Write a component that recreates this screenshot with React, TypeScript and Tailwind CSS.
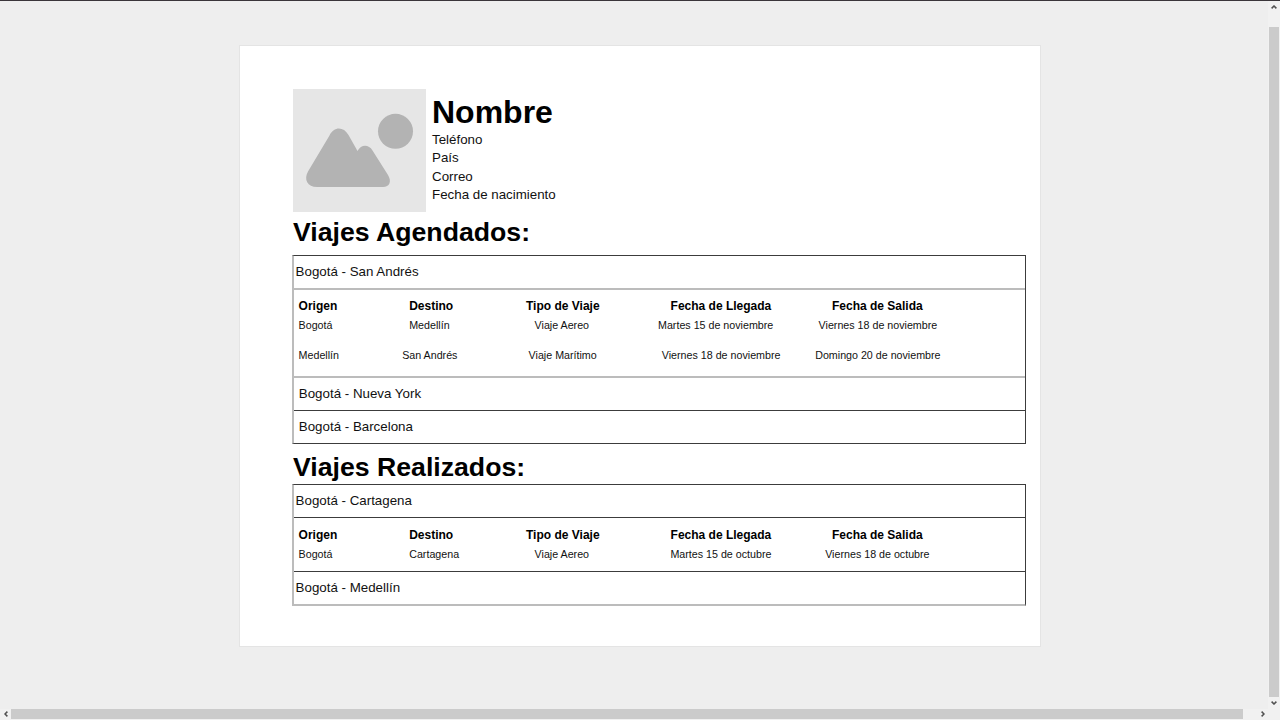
import { ReactNode } from "react";

type Cell = { text: string; pad: string };

const heads: Cell[] = [
  { text: "Origen", pad: "pl-[0.6px]" },
  { text: "Destino", pad: "pl-[9.2px]" },
  { text: "Tipo de Viaje", pad: "pl-[6px]" },
  { text: "Fecha de Llegada", pad: "pl-[20.6px]" },
  { text: "Fecha de Salida", pad: "pl-[22px]" },
];

const scheduled: Cell[][] = [
  [
    { text: "Bogotá", pad: "pl-[0.6px]" },
    { text: "Medellín", pad: "pl-[9.2px]" },
    { text: "Viaje Aereo", pad: "pl-[14.6px]" },
    { text: "Martes 15 de noviembre", pad: "pl-[8px]" },
    { text: "Viernes 18 de noviembre", pad: "pl-[8.6px]" },
  ],
  [
    { text: "Medellín", pad: "pl-[0.6px]" },
    { text: "San Andrés", pad: "pl-[2.2px]" },
    { text: "Viaje Marítimo", pad: "pl-[8.6px]" },
    { text: "Viernes 18 de noviembre", pad: "pl-[11.8px]" },
    { text: "Domingo 20 de noviembre", pad: "pl-[5.2px]" },
  ],
];

const done: Cell[] = [
  { text: "Bogotá", pad: "pl-[0.6px]" },
  { text: "Cartagena", pad: "pl-[9.2px]" },
  { text: "Viaje Aereo", pad: "pl-[14.6px]" },
  { text: "Martes 15 de octubre", pad: "pl-[20.4px]" },
  { text: "Viernes 18 de octubre", pad: "pl-[15.2px]" },
];

function Row({ cells, className }: { cells: Cell[]; className: string }) {
  return (
    <div className={`grid grid-cols-[102px_120px_130px_160px_215px] whitespace-nowrap pl-1 ${className}`}>
      {cells.map((c, i) => (
        <span key={i} className={c.pad}>{c.text}</span>
      ))}
    </div>
  );
}

const headCls = "h-4 text-[12px] leading-4 font-bold";
const cellCls = "h-4 text-[10.7px] leading-4 text-[#111]";

function Title({ children, className }: { children: ReactNode; className: string }) {
  return <div className={`flex items-center text-[13.33px] leading-none text-[#111] ${className}`}>{children}</div>;
}

function Chevron({ className }: { className: string }) {
  return (
    <svg viewBox="0 0 6 4" className={`h-[4px] w-[6px] ${className}`}>
      <path d="M.6 3.4 3 1l2.4 2.4" fill="none" stroke="#505050" strokeWidth="1.5" />
    </svg>
  );
}

export default function App() {
  return (
    <div className="flex h-[720px] w-[1280px] flex-col overflow-hidden border-t border-[#3a353a] bg-[#eeeeee] font-['Liberation_Sans',Arial,sans-serif] text-black">
      <div className="flex h-[708px]">
        <main className="w-[1268px] pt-[44px] pl-[239px]">
          <div className="h-[602px] w-[802px] border border-[#e4e4e4] bg-white pt-[43px] pl-[52px]">
            <header className="flex h-[123px] pl-px">
              <svg viewBox="0 0 133 123" className="h-[123px] w-[133px] shrink-0 bg-[#e6e6e6]">
                <circle cx="102.5" cy="42.3" r="17.5" fill="#b3b3b3" />
                <path
                  d="M36.5 46.5C41 37.300 50.500 37.300 55.500 46L64.500 62C68 55.500 75.500 55 79.500 61.500L95 86C99 92.500 96.500 98 90 98H24C14.500 98 10.500 90.500 15 82.500Z"
                  fill="#b3b3b3"
                />
              </svg>
              <div className="pt-[5px] pl-[6px]">
                <h1 className="h-9 text-[32px] leading-9 font-bold">Nombre</h1>
                <div className="pt-px text-[13.33px] leading-[18.4px] text-[#111]">
                  <p>Teléfono</p>
                  <p>País</p>
                  <p>Correo</p>
                  <p>Fecha de nacimiento</p>
                </div>
              </div>
            </header>
            <h2 className="h-[43px] pt-[5px] pl-px text-[26.67px] leading-[30px] font-bold">Viajes Agendados:</h2>
            <section className="h-[189px] w-[734px] border-y border-r border-l-2 border-y-[#3c3c3c] border-r-[#3c3c3c] border-l-[#bcbcbc]">
              <Title className="h-8 pl-[1.6px]">Bogotá - San Andrés</Title>
              <div className="h-[90px] border-y-2 border-[#bcbcbc] pt-[8px]">
                <Row cells={heads} className={headCls} />
                <Row cells={scheduled[0]} className={`mt-[3px] ${cellCls}`} />
                <Row cells={scheduled[1]} className={`mt-[14px] ${cellCls}`} />
              </div>
              <Title className="h-8 pl-[4.8px]">Bogotá - Nueva York</Title>
              <Title className="h-[33px] border-t border-[#3c3c3c] pl-[4.8px]">Bogotá - Barcelona</Title>
            </section>
            <h2 className="h-10 pt-[8px] pl-px text-[26.67px] leading-[30px] font-bold">Viajes Realizados:</h2>
            <section className="h-[122px] w-[734px] border-t border-r border-b-2 border-l-2 border-t-[#3c3c3c] border-r-[#3c3c3c] border-b-[#bcbcbc] border-l-[#bcbcbc]">
              <Title className="h-8 pl-[1.6px]">Bogotá - Cartagena</Title>
              <div className="h-[55px] border-y border-[#3c3c3c] pt-[9px]">
                <Row cells={heads} className={headCls} />
                <Row cells={done} className={`mt-[3px] ${cellCls}`} />
              </div>
              <Title className="h-8 pl-[1.6px]">Bogotá - Medellín</Title>
            </section>
          </div>
        </main>
        <div className="flex w-3 flex-col items-center bg-[#f1f1f1]">
          <div className="flex h-[26px] shrink-0 pt-[4px]"><Chevron className="" /></div>
          <div className="h-[670px] w-[10px] shrink-0 bg-[#cbcbcb]" />
          <div className="pt-[4px]"><Chevron className="block rotate-180" /></div>
        </div>
      </div>
      <div className="flex h-[11px] items-start bg-[#f1f1f1]">
        <div className="flex h-[10px] w-[11px] items-center justify-center"><Chevron className="-rotate-90" /></div>
        <div className="h-[10px] w-[1232px] bg-[#cbcbcb]" />
        <div className="flex h-[10px] items-center pl-[17px]"><Chevron className="rotate-90" /></div>
      </div>
    </div>
  );
}
